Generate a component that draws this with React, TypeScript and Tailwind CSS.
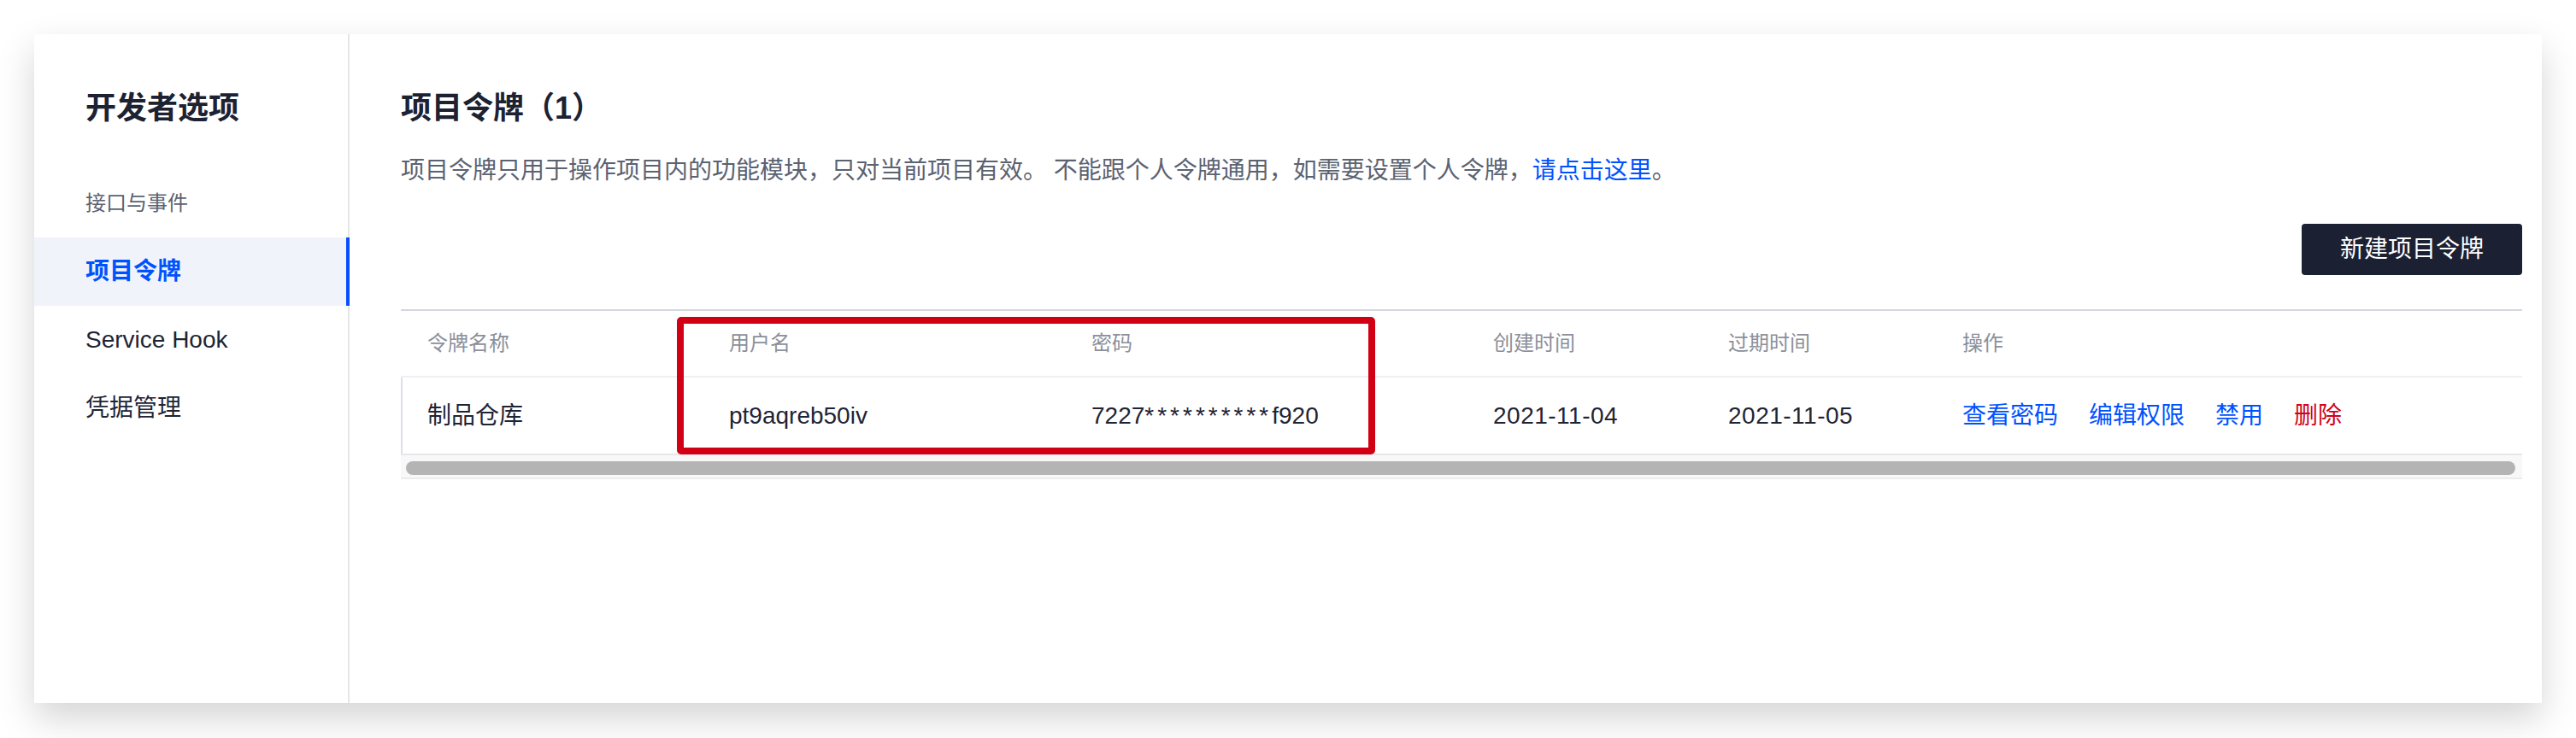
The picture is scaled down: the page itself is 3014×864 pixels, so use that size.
import React from "react";

const FONT = "font-['Liberation_Sans','Noto_Sans_CJK_SC',sans-serif]";

const navItems = [
  { label: "接口与事件", size: "text-[24px] text-[#5b6271]", active: false },
  { label: "项目令牌", size: "text-[28px] text-[#0052ff] font-semibold", active: true },
  { label: "Service Hook", size: "text-[28px] text-[#1f2434]", active: false },
  { label: "凭据管理", size: "text-[28px] text-[#1f2434]", active: false },
];

const cols = "grid grid-cols-[353px_424px_470px_275px_274px_1fr]";

function Sidebar() {
  return (
    <aside className="w-[369px] shrink-0 border-r-2 border-[#e6e6e8]">
      <h1 className="pl-[60px] pt-[67px] mb-[51px] text-[36px] leading-[40px] font-bold text-[#1c2232]">
        开发者选项
      </h1>
      <nav>
        {navItems.map((item) => (
          <div
            key={item.label}
            className={
              "relative h-[80px] flex items-center pl-[60px] " +
              (item.active ? "bg-[#f0f4fa]" : "")
            }
          >
            <span className={item.size}>{item.label}</span>
            {item.active && (
              <span className="absolute top-0 bottom-0 -right-[2px] w-[4px] bg-[#0a4dff]" />
            )}
          </div>
        ))}
      </nav>
    </aside>
  );
}

function TokenTable() {
  return (
    <div className="relative mt-[40px] border-t-2 border-[#d5d8e0]">
      <div className={cols + " h-[78px] items-center border-b-2 border-[#f0f0f4] text-[24px] text-[#8b909b]"}>
        <div className="pl-[31px]">令牌名称</div>
        <div className="pl-[31px]">用户名</div>
        <div className="pl-[31px]">密码</div>
        <div className="pl-[31px]">创建时间</div>
        <div className="pl-[31px]">过期时间</div>
        <div className="pl-[31px]">操作</div>
      </div>
      <div className={cols + " h-[91px] items-center border-b-2 border-[#e6e6eb] text-[28px] text-[#1f2434] shadow-[inset_2px_0_0_#dcdfe8]"}>
        <div className="pl-[31px]">制品仓库</div>
        <div className="pl-[31px]">pt9aqreb50iv</div>
        <div className="pl-[31px]">
          7227<span className="tracking-[4px]">**********</span>f920
        </div>
        <div className="pl-[31px] tracking-[0.5px]">2021-11-04</div>
        <div className="pl-[31px] tracking-[0.5px]">2021-11-05</div>
        <div className="pl-[31px] flex gap-[36px]">
          <span className="text-[#0052ff]">查看密码</span>
          <span className="text-[#0052ff]">编辑权限</span>
          <span className="text-[#0052ff]">禁用</span>
          <span className="text-[#d0021b]">删除</span>
        </div>
      </div>
      {/* scrollbar */}
      <div className="h-[28px] bg-[#f8f8f8] border-b-2 border-[#ececee] pl-[6px] pr-[8px] pt-[7px]">
        <div className="h-[16px] rounded-full bg-[#b4b4b4]" />
      </div>
      {/* annotation */}
      <div className="absolute left-[323px] top-[7px] w-[817px] h-[161px] border-[8px] border-[#d10014] rounded-[5px]" />
    </div>
  );
}

export default function App() {
  return (
    <div className={"w-full h-[864px] bg-white px-[40px] pt-[40px] overflow-hidden " + FONT}>
      <div className="h-[783px] bg-white flex shadow-[0_18px_40px_rgba(0,0,0,0.17)]">
        <Sidebar />
        <main className="flex-1 pl-[60px] pr-[23px]">
          <h2 className="pt-[67px] text-[36px] leading-[40px] font-bold text-[#1c2232]">
            项目令牌（1）
          </h2>
          <p className="mt-[33px] text-[28px] leading-[40px] text-[#5b6271]">
            项目令牌只用于操作项目内的功能模块，只对当前项目有效。 不能跟个人令牌通用，如需要设置个人令牌，
            <span className="text-[#0052ff]">请点击这里</span>。
          </p>
          <div className="mt-[42px] flex justify-end">
            <button className="h-[60px] px-[45px] rounded-[4px] bg-[#1b2133] text-[28px] text-white">
              新建项目令牌
            </button>
          </div>
          <TokenTable />
        </main>
      </div>
    </div>
  );
}
